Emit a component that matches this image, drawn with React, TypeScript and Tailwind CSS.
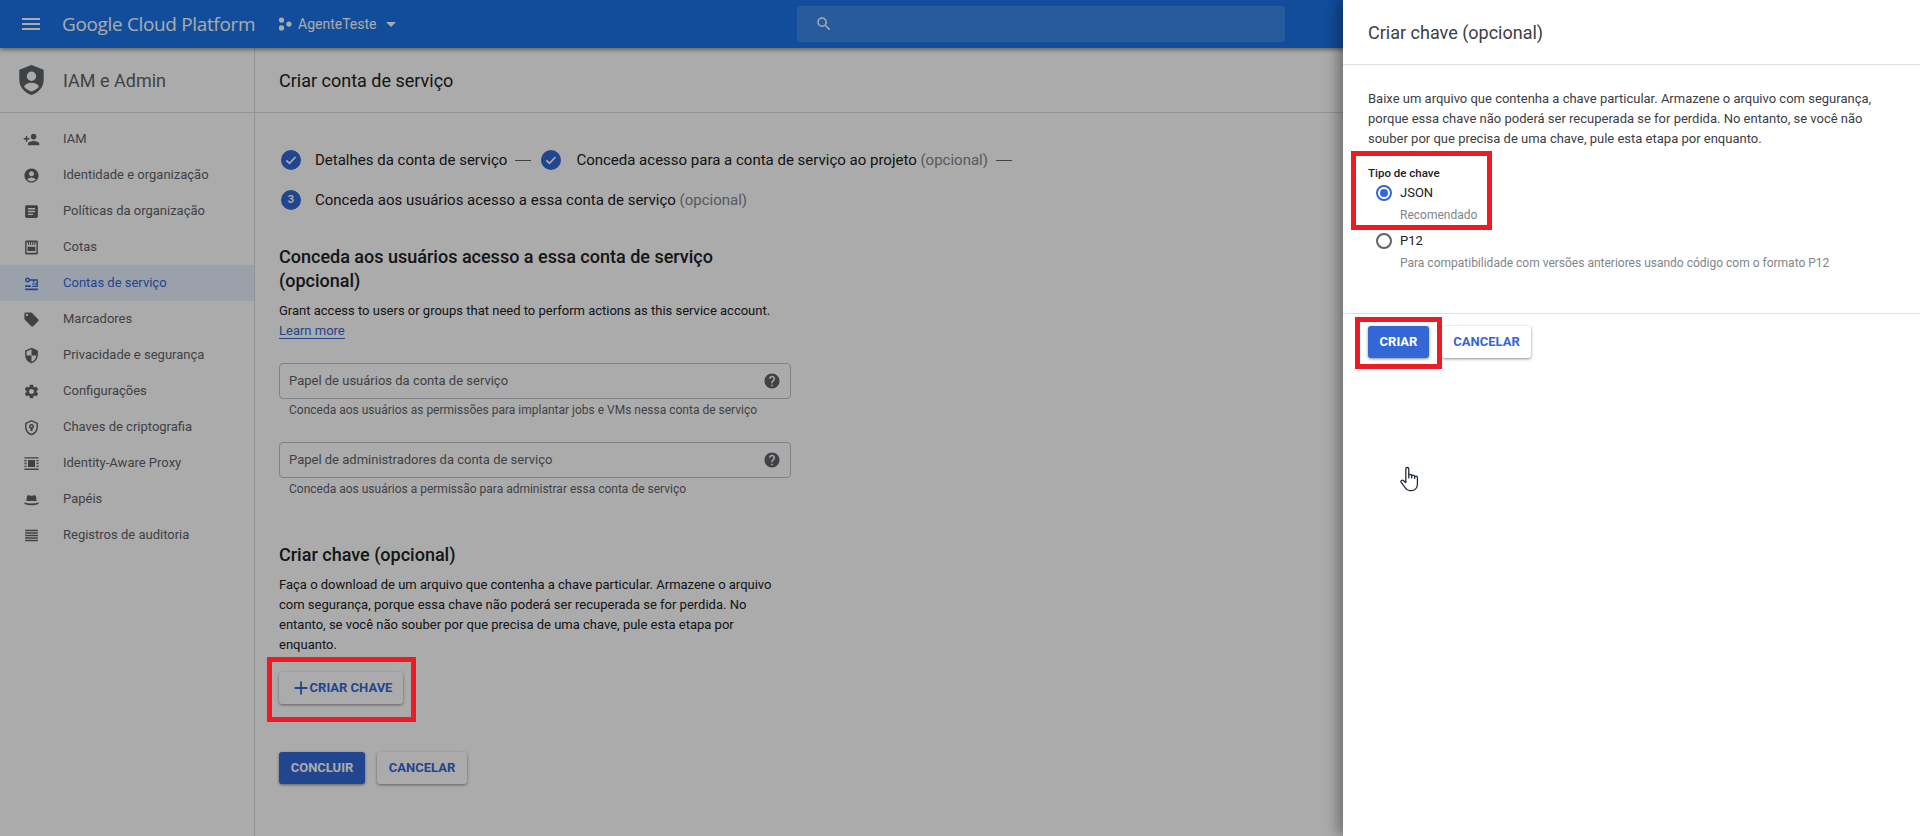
import React from 'react';
import {
  MdAccountCircle,
  MdAdd,
  MdArrowDropDown,
  MdArticle,
  MdHelp,
  MdLocalOffer,
  MdMenu,
  MdPersonAdd,
  MdSearch,
  MdSecurity,
  MdSettings,
} from 'react-icons/md';

const IconQuota = ({ className }: { className?: string }) => (
  <svg viewBox="0 0 24 24" className={className} fill="currentColor">
    <path d="M5 2h14a2 2 0 0 1 2 2v16a2 2 0 0 1-2 2H5a2 2 0 0 1-2-2V4a2 2 0 0 1 2-2zm0 2.500v15h14v-15h-1.500v4h-1.500v-4h-1.500v4H13v-4h-1.500v4H10v-4H8.500v4H7v-4H5zM6.500 11h11v6h-11v-6z" />
  </svg>
);

const IconServiceAccount = ({ className }: { className?: string }) => (
  <svg viewBox="0 0 24 24" className={className} fill="currentColor">
    <path d="M3 19h18v2.500H3V19zM6.500 3.500a3.500 3.500 0 0 1 3.300 2.500H21v11h-8v-2h6v-1.500h-6V12h6V8h-3v2.500h-2V8H9.800a3.500 3.500 0 1 1-3.300-4.500zm0 2a1.500 1.500 0 1 0 0 3 1.500 1.500 0 0 0 0-3zM3 14.500h8V17H3v-2.500z" />
  </svg>
);

const IconKeyShield = ({ className }: { className?: string }) => (
  <svg viewBox="0 0 24 24" className={className} fill="currentColor">
    <path
      fillRule="evenodd"
      d="M12 1.500l9 4v6c0 5.500-3.800 10.200-9 11.500-5.200-1.300-9-6-9-11.500v-6l9-4zm0 2.200L5 6.800v4.700c0 4.300 2.900 8 7 9.300 4.100-1.300 7-5 7-9.300V6.800l-7-3.100zM12 7a3.500 3.500 0 0 1 1.500 6.700V17h-3v-3.300A3.500 3.500 0 0 1 12 7zm0 2.200a1.300 1.300 0 1 0 0 2.600 1.300 1.300 0 0 0 0-2.600z"
    />
  </svg>
);

const IconProxy = ({ className }: { className?: string }) => (
  <svg viewBox="0 0 24 24" className={className} fill="currentColor">
    <path d="M2 3h20v2H2V3zm0 16h20v2H2v-2zM7 7h10v10H7V7zM2 7h3v2H2V7zm0 4h3v2H2v-2zm0 4h3v2H2v-2zm17-8h3v2h-3V7zm0 4h3v2h-3v-2zm0 4h3v2h-3v-2z" />
  </svg>
);

const IconHat = ({ className }: { className?: string }) => (
  <svg viewBox="0 0 24 24" className={className} fill="currentColor">
    <path d="M7.500 6c1.500 0 2.800.8 4.500.8S15 6 16.500 6c1 0 1.700.7 1.900 1.700l.9 6.300H4.700l.9-6.300C5.800 6.700 6.500 6 7.500 6zM2 16.200c3 1 6.300 1.500 10 1.500s7-.5 10-1.500v2.300c-3 1.100-6.300 1.700-10 1.700s-7-.6-10-1.700v-2.300z" />
  </svg>
);

const IconLines = ({ className }: { className?: string }) => (
  <svg viewBox="0 0 24 24" className={className} fill="currentColor">
    <path d="M3 4h18v2H3V4zm0 3.500h18v2H3v-2zM3 11h18v2H3v-2zm0 3.500h18v2H3v-2zM3 18h18v2H3v-2z" />
  </svg>
);

const IconProject = ({ className }: { className?: string }) => (
  <svg viewBox="0 0 16 16" className={className} fill="currentColor">
    <circle cx="4" cy="3.500" r="3" />
    <circle cx="4" cy="12.500" r="3" />
    <circle cx="12.500" cy="8" r="3" />
  </svg>
);

const IconAdminShield = ({ className }: { className?: string }) => (
  <svg viewBox="0 0 26 32" className={className} fill="currentColor">
    <path
      fillRule="evenodd"
      d="M13 0l13 5v11c0 7.500-5.500 13.500-13 16C5.500 29.500 0 23.500 0 16V5l13-5zm0 7a5 5 0 1 0 0 10 5 5 0 0 0 0-10zm0 12c-3.500 0-7 1.500-8 4 1.800 2.500 4.800 4.300 8 5.300 3.200-1 6.200-2.800 8-5.300-1-2.500-4.500-4-8-4z"
    />
  </svg>
);

const IconHand = ({ className }: { className?: string }) => (
  <svg viewBox="0 0 18 24" className={className} fill="#fff" stroke="currentColor" strokeWidth="1.200" strokeLinejoin="round" strokeLinecap="round">
    <path d="M5.500 15V2.500a1.400 1.400 0 0 1 2.800 0V11V9a1.400 1.400 0 0 1 2.800 0v2V9.800a1.400 1.400 0 0 1 2.800 0V11.500v-1a1.300 1.300 0 0 1 2.600 0V17c0 3.500-2.500 6-5.700 6H9c-2 0-3-1-4-2.500L1 15c-.7-1.200 1-2.500 2.200-1.500l2.300 2" />
  </svg>
);

const StepDone = () => (
  <svg viewBox="0 0 20 20" className="h-5 w-5 shrink-0">
    <circle cx="10" cy="10" r="10" fill="#3367d6" />
    <path d="M5.300 10.300l3.200 3 6-6.300" fill="none" stroke="#fff" strokeWidth="1.800" />
  </svg>
);

const StepDash = () => <span className="ml-[8px] h-px w-4 shrink-0 bg-[#5f6368]" />;

const navItems = [
  { label: 'IAM', icon: MdPersonAdd },
  { label: 'Identidade e organização', icon: MdAccountCircle },
  { label: 'Políticas da organização', icon: MdArticle },
  { label: 'Cotas', icon: IconQuota },
  { label: 'Contas de serviço', icon: IconServiceAccount, active: true },
  { label: 'Marcadores', icon: MdLocalOffer },
  { label: 'Privacidade e segurança', icon: MdSecurity },
  { label: 'Configurações', icon: MdSettings },
  { label: 'Chaves de criptografia', icon: IconKeyShield },
  { label: 'Identity-Aware Proxy', icon: IconProxy },
  { label: 'Papéis', icon: IconHat },
  { label: 'Registros de auditoria', icon: IconLines },
];

const raisedBtn = 'flex items-center justify-center rounded-[3px] text-[13px] font-bold shadow-[0_1px_3px_rgba(0,0,0,0.45)]';

const RoleField = ({ label, hint }: { label: string; hint: string }) => (
  <div className="w-[512px]">
    <div className="flex h-9 items-center justify-between rounded-[4px] border border-[#bdc1c6] pl-[9px] pr-[9px] text-[13px] text-[#5f6368]">
      <span>{label}</span>
      <MdHelp className="h-[18px] w-[18px] text-[#5f6368]" />
    </div>
    <p className="mt-[3px] pl-[10px] text-[12px] leading-[16px] text-[#5f6368]">{hint}</p>
  </div>
);

export default function App() {
  return (
    <div className="relative h-[836px] w-full overflow-hidden bg-white font-['Roboto',sans-serif] text-[#202124]">
      <header className="relative z-10 flex h-12 items-center bg-[#1a73e8] text-white shadow-[0_2px_4px_rgba(0,0,0,0.4)]">
        <MdMenu className="ml-[19px] h-6 w-6" />
        <span className="ml-[19px] w-[216px] font-['Open_Sans',sans-serif] text-[18.900px] tracking-[-0.300px] whitespace-nowrap">Google Cloud Platform</span>
        <IconProject className="h-[14px] w-[14px]" />
        <span className="ml-[6px] text-[14px]">AgenteTeste</span>
        <MdArrowDropDown className="ml-[3px] h-6 w-6" />
        <div className="ml-[394px] flex h-9 w-[488px] items-center rounded-[2px] bg-[#3c88eb] pl-[18px]">
          <MdSearch className="h-[18px] w-[18px]" />
        </div>
      </header>

      <div className="flex h-[788px]">
        <aside className="w-[255px] shrink-0 border-r border-[#dadce0]">
          <div className="flex h-[65px] items-center border-b border-[#dadce0] pl-[19px]">
            <IconAdminShield className="h-[30px] w-[25px] text-[#5f6368]" />
            <span className="ml-[19px] text-[18px] text-[#5f6368]">IAM e Admin</span>
          </div>
          <nav className="pt-[8px]">
            {navItems.map((item) => (
              <div
                key={item.label}
                className={`flex h-9 items-center pl-[23px] text-[13px] ${item.active ? 'bg-[#e8f0fe] text-[#3367d6]' : 'text-[#5f6368]'}`}
              >
                <item.icon className="h-[17px] w-[17px] shrink-0" />
                <span className="ml-[23px]">{item.label}</span>
              </div>
            ))}
          </nav>
        </aside>

        <main className="flex-1">
          <div className="flex h-[65px] items-center border-b border-[#dadce0] pl-[24px] text-[18px]">Criar conta de serviço</div>
          <div className="pl-[24px]">
            <div className="mt-[27px] flex h-10 items-center pl-[2px] text-[15px]">
              <StepDone />
              <span className="ml-[14px]">Detalhes da conta de serviço</span>
              <StepDash />
              <span className="ml-[10px]"><StepDone /></span>
              <span className="ml-[15px]">Conceda acesso para a conta de serviço ao projeto <span className="text-[#80868b]">(opcional)</span></span>
              <StepDash />
            </div>
            <div className="flex h-10 items-center pl-[2px] text-[15px]">
              <span className="flex h-5 w-5 shrink-0 items-center justify-center rounded-full bg-[#3367d6] text-[11px] font-bold text-white">3</span>
              <span className="ml-[14px]">Conceda aos usuários acesso a essa conta de serviço <span className="text-[#80868b]">(opcional)</span></span>
            </div>

            <h2 className="mt-[25px] w-[513px] text-[18px] leading-6 font-medium">Conceda aos usuários acesso a essa conta de serviço (opcional)</h2>
            <p className="mt-[8px] text-[13px] leading-5">Grant access to users or groups that need to perform actions as this service account.</p>
            <a className="block h-[18px] w-fit border-b border-[#3367d6] text-[13px] leading-5 text-[#3367d6]">Learn more</a>

            <div className="mt-[24px] flex flex-col gap-[24px]">
              <RoleField label="Papel de usuários da conta de serviço" hint="Conceda aos usuários as permissões para implantar jobs e VMs nessa conta de serviço" />
              <RoleField label="Papel de administradores da conta de serviço" hint="Conceda aos usuários a permissão para administrar essa conta de serviço" />
            </div>

            <h2 className="mt-[46px] text-[18px] leading-6 font-medium">Criar chave (opcional)</h2>
            <p className="mt-[8px] w-[513px] text-[13px] leading-5">Faça o download de um arquivo que contenha a chave particular. Armazene o arquivo com segurança, porque essa chave não poderá ser recuperada se for perdida. No entanto, se você não souber por que precisa de uma chave, pule esta etapa por enquanto.</p>

            <button className={`${raisedBtn} mt-[17px] h-8 w-[124px] bg-white text-[#3367d6]`}>
              <MdAdd className="h-[22px] w-[22px]" />
              <span className="-ml-[2px]">CRIAR CHAVE</span>
            </button>
            <div className="mt-[48px] flex gap-3">
              <button className={`${raisedBtn} h-8 w-[86px] bg-[#3367d6] text-white`}>CONCLUIR</button>
              <button className={`${raisedBtn} h-8 w-[90px] bg-white text-[#3367d6]`}>CANCELAR</button>
            </div>
          </div>
        </main>
      </div>

      {/* modal scrim */}
      <div className="absolute inset-0 z-20 bg-black/33" />

      {/* side panel */}
      <section className="absolute top-0 right-0 bottom-0 z-30 w-[577px] bg-white shadow-[-4px_0_14px_rgba(0,0,0,0.4)]">
        <div className="flex h-[65px] items-center border-b border-[#e0e0e0] pl-[25px] text-[18px] text-[#3c4043]">Criar chave (opcional)</div>
        <p className="mt-[24px] w-[530px] pl-[25px] text-[13px] leading-5 text-[#3c4043]">Baixe um arquivo que contenha a chave particular. Armazene o arquivo com segurança, porque essa chave não poderá ser recuperada se for perdida. No entanto, se você não souber por que precisa de uma chave, pule esta etapa por enquanto.</p>

        <div className="mt-[16px] h-[149px] border-b border-[#e0e0e0] pl-[25px]">
          <div className="text-[11.500px] leading-4 font-medium text-[#202124]">Tipo de chave</div>
          <div className="mt-[2px] flex h-5 items-center pl-[8px] text-[13px]">
            <span className="flex h-4 w-4 items-center justify-center rounded-full border-2 border-[#3367d6]">
              <span className="h-2 w-2 rounded-full bg-[#3367d6]" />
            </span>
            <span className="ml-[8px]">JSON</span>
          </div>
          <div className="mt-[4px] pl-[32px] text-[12px] leading-4 text-[#80868b]">Recomendado</div>
          <div className="mt-[8px] flex h-5 items-center pl-[8px] text-[13px]">
            <span className="h-4 w-4 rounded-full border-2 border-[#5f6368]" />
            <span className="ml-[8px]">P12</span>
          </div>
          <div className="mt-[4px] pl-[32px] text-[12px] leading-4 text-[#80868b]">Para compatibilidade com versões anteriores usando código com o formato P12</div>
        </div>

        <div className="mt-[12px] flex gap-[13px] pl-[25px]">
          <button className={`${raisedBtn} h-8 w-[61px] bg-[#3367d6] text-white`}>CRIAR</button>
          <button className={`${raisedBtn} h-8 w-[89px] bg-white text-[#3367d6]`}>CANCELAR</button>
        </div>
      </section>

      {/* annotations painted on the screenshot */}
      <div className="absolute top-[657px] left-[267px] z-40 h-[65px] w-[149px] border-[5px] border-[#ed1c24]" />
      <div className="absolute top-[151px] left-[1351px] z-40 h-[79px] w-[141px] border-[5px] border-[#ed1c24]" />
      <div className="absolute top-[317px] left-[1355px] z-40 h-[52px] w-[87px] border-[5px] border-[#ed1c24]" />
      <IconHand className="absolute top-[466px] left-[1400px] z-40 h-[26px] w-[19px] text-[#1f2937]" />
    </div>
  );
}
